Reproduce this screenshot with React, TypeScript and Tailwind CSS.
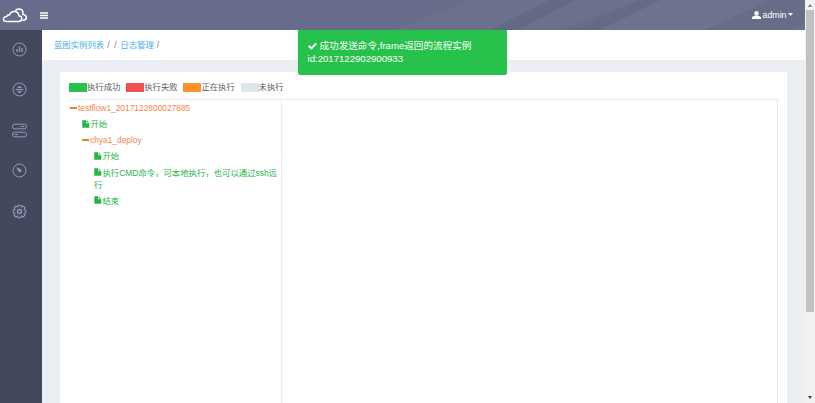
import React from "react";

const legend = [
  { label: "执行成功", color: "bg-[#27c24c]" },
  { label: "执行失败", color: "bg-[#f05050]" },
  { label: "正在执行", color: "bg-[#ff902b]" },
  { label: "未执行", color: "bg-[#dde6e9]" },
];

function FileIcon() {
  return (
    <svg className="mr-px inline-block h-[8px] w-[7.5px] align-[-0.5px]" viewBox="0 0 8 8" fill="currentColor">
      <path d="M0.3 0H4.3V3.2H7.8V8H0.3Z M5 0L7.6 2.5H5Z" />
    </svg>
  );
}

function Minus() {
  return <span className="mr-px inline-block h-[2px] w-[7px] bg-[#e0892f] align-[2.5px]" />;
}

function Header() {
  return (
    <header className="relative flex h-[30px] shrink-0 items-center bg-[#666c89] text-white">
      <svg className="absolute inset-0 h-full w-full" viewBox="0 0 805 30" preserveAspectRatio="none">
        <path d="M470 0H640L560 30H395Z" fill="#6b718d" />
        <path d="M550 0H575L518 30H490Z" fill="#646986" />
        <path d="M640 0H805V30H595Z" fill="#6d738f" />
        <path d="M640 0H660L600 30H575Z" fill="#646986" />
        <path d="M770 0H805V24L790 30H705Z" fill="#676d88" />
      </svg>
      <svg className="relative ml-[2px] mt-[2px] h-[16px] w-[26px]" viewBox="0 0 26 16" fill="none" stroke="white" strokeWidth="1.5" strokeLinejoin="round" strokeLinecap="round">
        <path d="M5 13.5H16.5C18.6 13.5 19.8 12.2 19.8 10.6C19.8 9 18.6 7.9 17 7.9C16.8 5.2 14.8 3.4 12.3 3.4C9.8 3.4 8 4.9 7.4 7C6.3 6.7 5 7.3 4.7 8.6C2.8 8.6 1.4 9.6 1.4 11.2C1.4 12.6 2.8 13.5 5 13.5Z" />
        <path d="M13.2 3C14 1.6 15.2 1.1 16.7 1.1C19.2 1.1 21 2.8 21 5.2C20.9 5.8 20.8 6.1 20.7 6.5C22.8 6.4 24.4 7.7 24.4 9.6C24.4 11.3 23 12.2 20.9 12.2" />
      </svg>
      <svg className="relative ml-[12px] h-[7px] w-[8px]" viewBox="0 0 8 7" stroke="white" strokeWidth="1.3">
        <path d="M0 1H8M0 3.5H8M0 6H8" />
      </svg>
      <div className="relative ml-auto mr-[12px] flex items-center text-[8.8px] leading-none">
        <svg className="mr-[2px] h-[8px] w-[9px]" viewBox="0 0 9 8" fill="white">
          <ellipse cx="4.5" cy="2.3" rx="2.1" ry="2.3" />
          <path d="M0 8V6.7C0 5.5 1.3 5.2 3 4.5H6C7.7 5.2 9 5.5 9 6.7V8Z" />
        </svg>
        <span>admin</span>
        <svg className="ml-[1.5px] h-[3px] w-[5px]" viewBox="0 0 5 3" fill="white">
          <path d="M0 0H5L2.5 3Z" />
        </svg>
      </div>
    </header>
  );
}

function Sidebar() {
  const icon = "h-[15px] w-[15px]";
  return (
    <nav className="flex w-[42px] shrink-0 flex-col items-center gap-[25.6px] bg-[#43485c] pr-[4px] pt-[11.5px]">
      <svg className={icon} viewBox="0 0 15 15" fill="none" stroke="#919ab9" strokeWidth="1">
        <circle cx="7.5" cy="7.5" r="6.5" />
        <path d="M5 7V10M7.5 4.5V10M10 6V10" strokeWidth="1.3" />
      </svg>
      <svg className={icon} viewBox="0 0 15 15" fill="none" stroke="#919ab9" strokeWidth="1">
        <circle cx="7.5" cy="7.5" r="6.5" />
        <path d="M3.7 7.5H11.3" strokeWidth="1.2" />
        <path d="M5 6L7.5 3.8L10 6ZM5 9L7.5 11.2L10 9Z" fill="#919ab9" stroke="none" />
      </svg>
      <svg className={icon} viewBox="0 0 15 15" fill="none" stroke="#919ab9" strokeWidth="1">
        <rect x="0.6" y="1.2" width="13.8" height="4.6" rx="1.8" />
        <rect x="0.6" y="9.2" width="13.8" height="4.6" rx="1.8" />
        <path d="M8.8 3.5H12.3M2.7 11.5H6" />
      </svg>
      <svg className={icon} viewBox="0 0 15 15" fill="none" stroke="#919ab9" strokeWidth="1">
        <circle cx="7.5" cy="7.5" r="6.5" />
        <path d="M4.2 4.3L9.3 6.4L9.3 8.8L6.8 9.1Z" fill="#919ab9" stroke="none" />
      </svg>
      <svg className={icon} viewBox="0 0 15 15" fill="none" stroke="#919ab9" strokeWidth="1.1" strokeLinejoin="round">
        <path d="M6.2 1.2H8.8L9.3 2.9L11.1 2L13 3.9L12.1 5.7L13.8 6.2V8.8L12.1 9.3L13 11.1L11.1 13L9.3 12.1L8.8 13.8H6.2L5.7 12.1L3.9 13L2 11.1L2.9 9.3L1.2 8.8V6.2L2.9 5.7L2 3.9L3.9 2L5.7 2.9Z" />
        <circle cx="7.5" cy="7.5" r="2" strokeWidth="1.4" />
      </svg>
    </nav>
  );
}

function Tree() {
  return (
    <div className="w-[213px] shrink-0 whitespace-nowrap border-r border-[#e9edf0] pt-[2px] leading-[12.15px] text-[#27b54a]">
      <div className="mb-[4px] pl-[1px] text-[#f9854a]"><Minus />testflow1_2017122800027685</div>
      <div className="mb-[4px] pl-[13px]"><FileIcon />开始</div>
      <div className="mb-[4px] pl-[13px] text-[#f9854a]"><Minus />chya1_deploy</div>
      <div className="mb-[4px] pl-[25px]"><FileIcon />开始</div>
      <div className="mb-[4px] pl-[25px]">
        <FileIcon />执行CMD命令，可本地执行，也可以通过ssh远<br />行
      </div>
      <div className="pl-[25px]"><FileIcon />结束</div>
    </div>
  );
}

export default function App() {
  return (
    <div className="relative flex h-[403px] w-[815px] overflow-hidden bg-[#ebeef2] font-['Liberation_Sans','Noto_Sans_CJK_SC',sans-serif] text-[8.4px] text-[#555b66]">
      <div className="flex w-[805px] shrink-0 flex-col">
        <Header />
        <div className="flex min-h-0 flex-1">
          <Sidebar />
          <main className="flex min-w-0 flex-1 flex-col">
            <div className="flex h-[30px] shrink-0 items-center whitespace-pre bg-white pl-[12px] text-[#777]">
              <span className="text-[#48b0e8]">蓝图实例列表</span>
              <span className="ml-[3px]">/</span>
              <span className="ml-[4.6px]">/</span>
              <span className="ml-[3.8px] text-[#48b0e8]">日志管理</span>
              <span className="ml-[3px]">/</span>
            </div>
            <section className="ml-[18px] mr-[18px] mt-[12px] flex flex-1 flex-col bg-white px-[9px]">
              <div className="flex h-[27px] items-center gap-[5.7px] pt-[3px]">
                {legend.map((item) => (
                  <div key={item.label} className="flex items-center leading-[12px]">
                    <span className={`h-[9px] w-[18px] ${item.color}`} />
                    <span>{item.label}</span>
                  </div>
                ))}
              </div>
              <div className="flex flex-1 border-r border-t border-[#e6eaed]">
                <Tree />
              </div>
            </section>
          </main>
        </div>
      </div>
      <div className="flex w-[10px] flex-col items-center bg-[#f1f1f1]">
        <div className="flex h-[10px] shrink-0 items-center">
          <svg className="h-[3px] w-[4px]" viewBox="0 0 4 3" fill="#777"><path d="M0 3L2 0L4 3Z" /></svg>
        </div>
        <div className="h-[302px] w-[8px] shrink-0 bg-[#c1c1c1]" />
        <svg className="mb-[4px] mt-auto h-[3px] w-[4px]" viewBox="0 0 4 3" fill="#444"><path d="M0 0H4L2 3Z" /></svg>
      </div>
      <div className="absolute left-[298px] top-[30px] h-[45px] w-[209px] whitespace-nowrap rounded-b-[2px] bg-[#27c24c] pl-[9.5px] pt-[9px] text-[9.6px] leading-[13.3px] text-white">
        <div className="flex items-center">
          <svg className="mr-[3px] h-[8px] w-[9px]" viewBox="0 0 9 8" fill="none" stroke="white" strokeWidth="2"><path d="M0.8 4L3.4 6.4L8.3 1.4" /></svg>
          <span>成功发送命令,frame返回的流程实例</span>
        </div>
        <div>id:2017122902900933</div>
      </div>
    </div>
  );
}
